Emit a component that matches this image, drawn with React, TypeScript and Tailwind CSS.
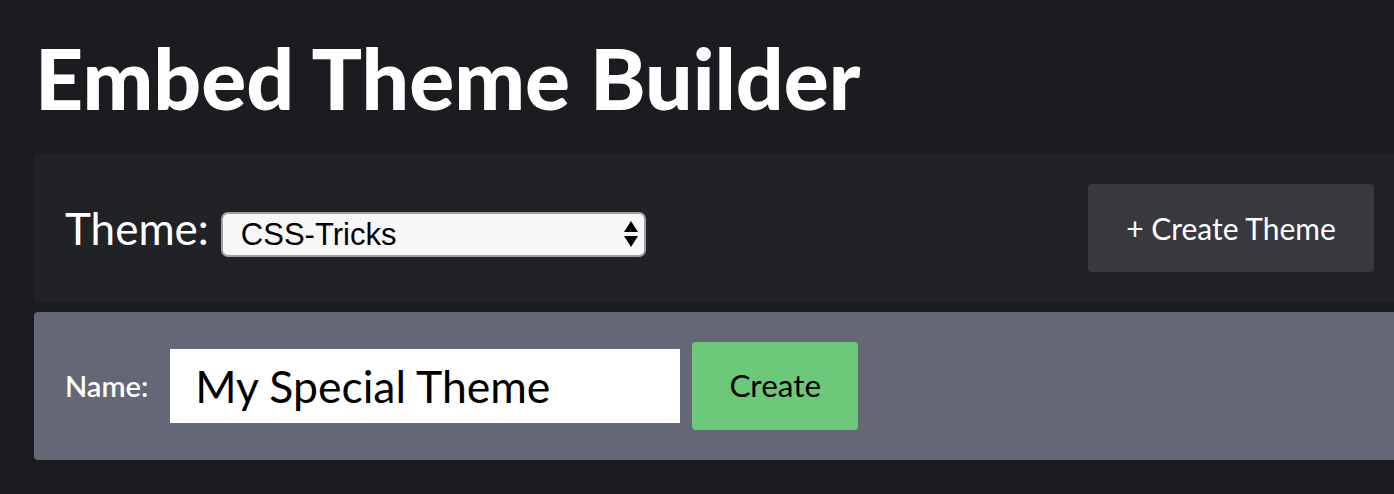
import React from 'react'

function Chevrons() {
  return (
    <svg width="16" height="30" viewBox="0 0 16 30" className="shrink-0">
      <path d="M8 2 L15 13 L1 13 Z" fill="#000" />
      <path d="M8 28 L15 17 L1 17 Z" fill="#000" />
    </svg>
  )
}

export default function App() {
  return (
    <div className="min-h-[494px] w-full overflow-hidden bg-[#1b1c20] font-['Lato',sans-serif]">
      <h1 className="pl-[35px] pt-[28px] text-[84px] font-black leading-[100px] text-white">
        Embed Theme Builder
      </h1>

      <div className="ml-[34px] mt-[26px] flex h-[148px] items-center justify-between rounded-l-[4px] bg-[#212226] pl-[31px] pr-5">
        <div className="flex items-center gap-3">
          <span className="text-[44px] font-normal leading-none text-white">Theme:</span>
          <div className="mt-[12px] flex h-[45px] w-[425px] items-center justify-between rounded-[7px] border-2 border-[#a0a0a0] bg-[#f7f7f7] pl-[18px] pr-[5px]">
            <span className="font-['Liberation_Sans',Arial,sans-serif] text-[31px] leading-none text-black">
              CSS-Tricks
            </span>
            <Chevrons />
          </div>
        </div>
        <button className="h-[88px] w-[286px] rounded-[4px] bg-[#38393e] text-[30px] text-white">
          + Create Theme
        </button>
      </div>

      <div className="ml-[34px] mt-[10px] flex h-[148px] items-center rounded-l-[4px] bg-[#646876] pl-[31px]">
        <span className="text-[29px] font-semibold text-white">Name:</span>
        <div className="ml-[22px] flex h-[74px] w-[510px] items-center bg-white pl-[25px]">
          <span className="text-[44.5px] leading-none text-black">My Special Theme</span>
        </div>
        <button className="ml-3 h-[88px] w-[166px] rounded-[4px] bg-[#6dc97a] text-[31.5px] text-black">
          Create
        </button>
      </div>
    </div>
  )
}
